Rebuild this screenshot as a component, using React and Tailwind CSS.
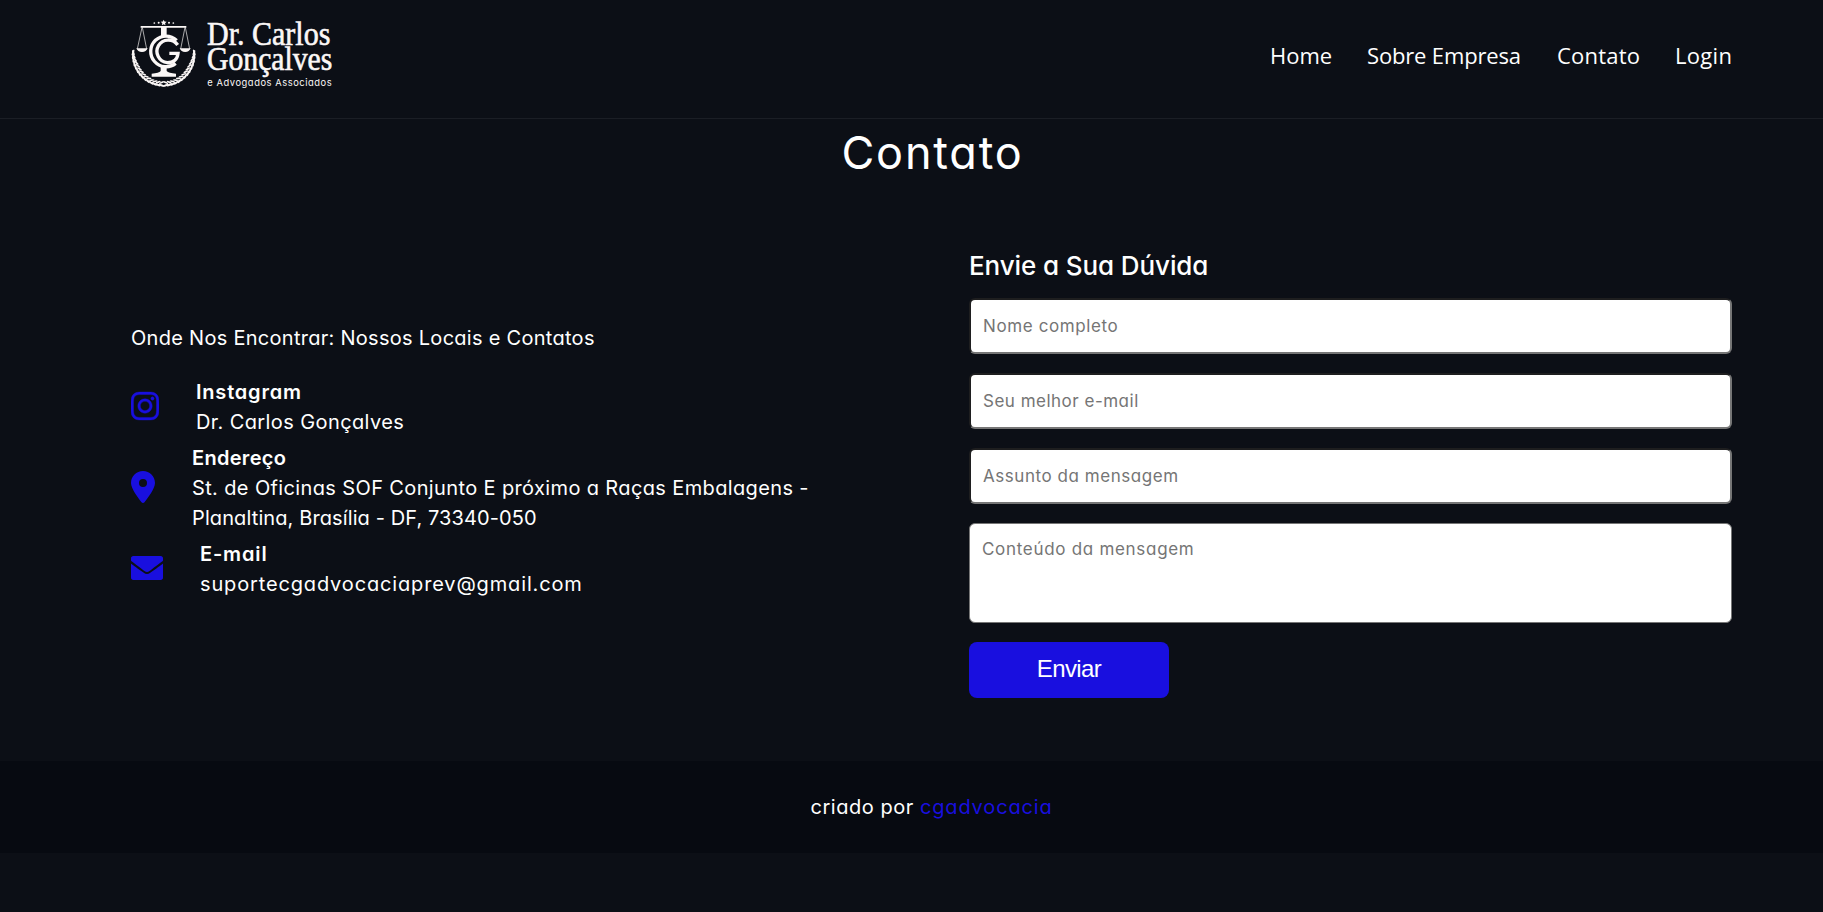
import React from "react";

const LAUREL = Array.from({ length: 14 }, (_, i) => -4 + i * 6.9);

function Leaf({ x, y, r, big }) {
  return <ellipse cx={x} cy={y} rx={big ? 9.5 : 8} ry={big ? 3 : 2.6} transform={`rotate(${r} ${x} ${y})`} />;
}

function Logo() {
  return (
    <svg className="h-[72px] w-[203px] overflow-visible" viewBox="33 24 609 216" fill="#fbf7f6">
      <path d="M131 29l2.600 5.600 6.200.7-4.600 4.200 1.300 6.100-5.500-3.100-5.500 3.100 1.300-6.100-4.600-4.200 6.200-.7z" />
      <circle cx="103" cy="39" r="2.600" />
      <circle cx="116" cy="38" r="3" />
      <circle cx="147" cy="38" r="3" />
      <circle cx="160" cy="39" r="2.600" />
      <path d="M62 48h137v5H140v25h-17V53H62z" />
      <path
        d="M66 52L52 117M67 52L80 117M195 52L182 117M196 52L209 117"
        stroke="#fbf7f6"
        strokeWidth="2"
        fill="none"
      />
      <path d="M49 115h34q-4 11-17 11t-17-11zM179 115h33q-4 11-16.500 11T179 115z" />
      <g fill="none" stroke="#fbf7f6">
        <path d="M170 91A46 46 0 1 0 167 160" strokeWidth="10" />
        <path d="M173 105A34 34 0 1 0 142 158Q171 158 174 130H148" strokeWidth="10" />
      </g>
      <path d="M122 165h18v18q6 6 28 8v9H95v-9q22-2 27-8z" />
      {LAUREL.map((deg, i) => {
        const t = (deg * Math.PI) / 180;
        const dx = Math.cos(t);
        const dy = Math.sin(t);
        const turn = 90 - deg;
        const inner = 84 + Math.max(0, 7 - i * 2);
        return (
          <g key={deg}>
            <Leaf x={131 - inner * dx} y={134 + inner * dy} r={turn - 30} />
            <Leaf x={131 + inner * dx} y={134 + inner * dy} r={-(turn - 30)} />
            <Leaf big x={131 - 92 * dx} y={134 + 92 * dy} r={turn + 14} />
            <Leaf big x={131 + 92 * dx} y={134 + 92 * dy} r={-(turn + 14)} />
          </g>
        );
      })}
      <g className="font-['Liberation_Serif',serif]" stroke="#fbf7f6" strokeWidth="1.800" fontSize="100">
        <text x="261" y="106" textLength="370" lengthAdjust="spacingAndGlyphs">Dr. Carlos</text>
        <text x="261" y="180" textLength="376" lengthAdjust="spacingAndGlyphs">Gonçalves</text>
      </g>
      <text x="262" y="227" fontSize="28" textLength="373" className="font-[Inter,sans-serif]">
        e Advogados Associados
      </text>
    </svg>
  );
}

function InstagramIcon() {
  return (
    <svg className="mb-0.5 h-8 w-7 shrink-0" viewBox="0 0 448 512" fill="#190fdf" stroke="#190fdf" strokeWidth="6">
      <path d="M224.100 141c-63.600 0-114.900 51.300-114.900 114.900s51.300 114.900 114.900 114.900S339 319.500 339 255.900 287.700 141 224.100 141zm0 189.600c-41.100 0-74.700-33.500-74.700-74.700s33.500-74.700 74.700-74.700 74.700 33.500 74.700 74.700-33.600 74.700-74.700 74.700zm146.400-194.300c0 14.900-12 26.800-26.800 26.800-14.900 0-26.800-12-26.800-26.800s12-26.800 26.800-26.800 26.800 12 26.800 26.800zm76.100 27.200c-1.700-35.900-9.900-67.700-36.200-93.900-26.200-26.200-58-34.400-93.900-36.200-37-2.100-147.900-2.100-184.900 0-35.800 1.700-67.600 9.900-93.900 36.100s-34.400 58-36.200 93.900c-2.100 37-2.100 147.900 0 184.900 1.700 35.900 9.900 67.700 36.200 93.900s58 34.400 93.900 36.200c37 2.100 147.900 2.100 184.900 0 35.900-1.700 67.700-9.900 93.900-36.200 26.200-26.200 34.400-58 36.200-93.900 2.100-37 2.100-147.800 0-184.800zM398.800 388c-7.800 19.600-22.900 34.700-42.600 42.600-29.500 11.700-99.500 9-132.100 9s-102.700 2.600-132.100-9c-19.600-7.800-34.700-22.900-42.600-42.600-11.700-29.500-9-99.500-9-132.100s-2.600-102.700 9-132.100c7.800-19.600 22.900-34.700 42.600-42.600 29.500-11.700 99.500-9 132.100-9s102.700-2.600 132.100 9c19.600 7.800 34.700 22.900 42.600 42.600 11.700 29.500 9 99.500 9 132.100s2.700 102.700-9 132.100z" />
    </svg>
  );
}

function PinIcon() {
  return (
    <svg className="mb-0.5 h-8 w-6 shrink-0" viewBox="0 0 384 512" fill="#190fdf">
      <path d="M215.700 499.200C267 435 384 279.400 384 192 384 86 298 0 192 0S0 86 0 192c0 87.400 117 243 168.300 307.200 12.300 15.300 35.100 15.300 47.400 0zM192 128a64 64 0 1 1 0 128 64 64 0 1 1 0-128z" />
    </svg>
  );
}

function EnvelopeIcon() {
  return (
    <svg className="mb-0.5 size-8 shrink-0" viewBox="0 0 512 512" fill="#190fdf">
      <path d="M502.300 190.800c3.900-3.100 9.700-.2 9.700 4.700V412c0 20-16 36-36 36H36c-20 0-36-16-36-36V195.600c0-5 5.700-7.800 9.700-4.700 22.400 17.400 52.100 39.500 154.100 113.600 21.100 15.400 56.700 47.800 92.200 47.600 35.700.3 72-32.800 92.300-47.600 102-74.100 131.600-96.300 154-113.700zM256 320c23.200.4 56.600-29.200 73.400-41.400 132.700-96.300 142.800-104.700 173.400-128.700 5.800-4.500 9.200-11.500 9.200-18.900v-31c0-20-16-36-36-36H36C16 64 0 80 0 100v31c0 7.400 3.400 14.300 9.200 18.900 30.600 23.900 40.700 32.400 173.400 128.700 16.800 12.200 50.200 41.800 73.400 41.400z" />
    </svg>
  );
}

function Contact({ icon, title, children }) {
  return (
    <div className="flex items-center gap-[37px]">
      {icon}
      <div>
        {title}
        {children}
      </div>
    </div>
  );
}

const field =
  "block h-14 w-full rounded-md border-2 border-t-[#1e1e1f] border-l-[#1e1e1f] border-r-[#767676] border-b-[#767676] bg-white px-3 text-[17px] placeholder:text-[#757575] placeholder:opacity-100";

export default function App() {
  return (
    <div className="min-h-screen bg-[#0c0f16] font-[Inter,sans-serif] text-white [font-feature-settings:'cv11']">
      <header className="flex h-[119px] items-start justify-between border-b border-[#1b1e25] pr-[91px] pl-[131px]">
        <div className="pt-[18px]">
          <Logo />
        </div>
        <nav className="flex pt-[39px] font-['Open_Sans',sans-serif] text-[22px] leading-8 font-medium whitespace-nowrap">
          <a className="w-[97px]">Home</a>
          <a className="w-[190px] tracking-[-0.16px]">Sobre Empresa</a>
          <a className="w-[118px] tracking-[0.2px]">Contato</a>
          <a className="w-[57px] tracking-[0.3px]">Login</a>
        </nav>
      </header>

      <main className="h-[642px] pr-[91px] pl-[131px]">
        <h1 className="pt-px pl-[2px] text-center text-[45px] leading-[66px] tracking-[1.8px]">Contato</h1>
        <div className="flex justify-between pt-[61px]">
          <section className="w-[720px] pt-[76px] text-[20px] leading-[30px] whitespace-nowrap">
            <p className="mb-6 tracking-[0.28px]">Onde Nos Encontrar: Nossos Locais e Contatos</p>
            <div className="flex flex-col gap-1.5">
              <Contact
                icon={<InstagramIcon />}
                title={<h3 className="font-semibold tracking-[0.8px]">Instagram</h3>}
              >
                <p className="tracking-[0.4px]">Dr. Carlos Gonçalves</p>
              </Contact>
              <Contact
                icon={<PinIcon />}
                title={<h3 className="font-semibold tracking-[0.3px]">Endereço</h3>}
              >
                <p className="tracking-[0.37px]">St. de Oficinas SOF Conjunto E próximo a Raças Embalagens -</p>
                <p className="tracking-[0.11px]">Planaltina, Brasília - DF, 73340-050</p>
              </Contact>
              <Contact
                icon={<EnvelopeIcon />}
                title={<h3 className="font-semibold tracking-[0.85px]">E-mail</h3>}
              >
                <p className="tracking-[0.85px]">suportecgadvocaciaprev@gmail.com</p>
              </Contact>
            </div>
          </section>

          <form className="w-[763px]">
            <h2 className="mb-[13px] text-[26px] leading-[38px] font-medium tracking-[-0.1px]">Envie a Sua Dúvida</h2>
            <div className="flex flex-col gap-[19px]">
              <input className={`${field} tracking-[0.61px]`} placeholder="Nome completo" />
              <input className={`${field} tracking-[0.5px]`} placeholder="Seu melhor e-mail" />
              <input className={`${field} tracking-[0.55px]`} placeholder="Assunto da mensagem" />
              <textarea
                className="block h-[100px] w-full resize-none rounded-md border border-[#767676] bg-white px-3 py-[13px] text-[17px] leading-[25px] tracking-[0.7px] placeholder:text-[#757575] placeholder:opacity-100"
                placeholder="Conteúdo da mensagem"
              />
              <button
                type="button"
                className="h-14 w-[200px] rounded-lg bg-[#190fdf] pb-0.5 font-['Liberation_Sans',Arial,sans-serif] text-2xl tracking-[-0.6px]"
              >
                Enviar
              </button>
            </div>
          </form>
        </div>
      </main>

      <footer className="flex h-[92px] items-center justify-center gap-[6px] bg-[#070a11] pr-[91px] pl-[131px] text-[20px] leading-[30px]">
        <span className="tracking-[0.55px]">criado por</span>
        <a className="tracking-[0.85px] text-[#190fdf]">cgadvocacia</a>
      </footer>
    </div>
  );
}
